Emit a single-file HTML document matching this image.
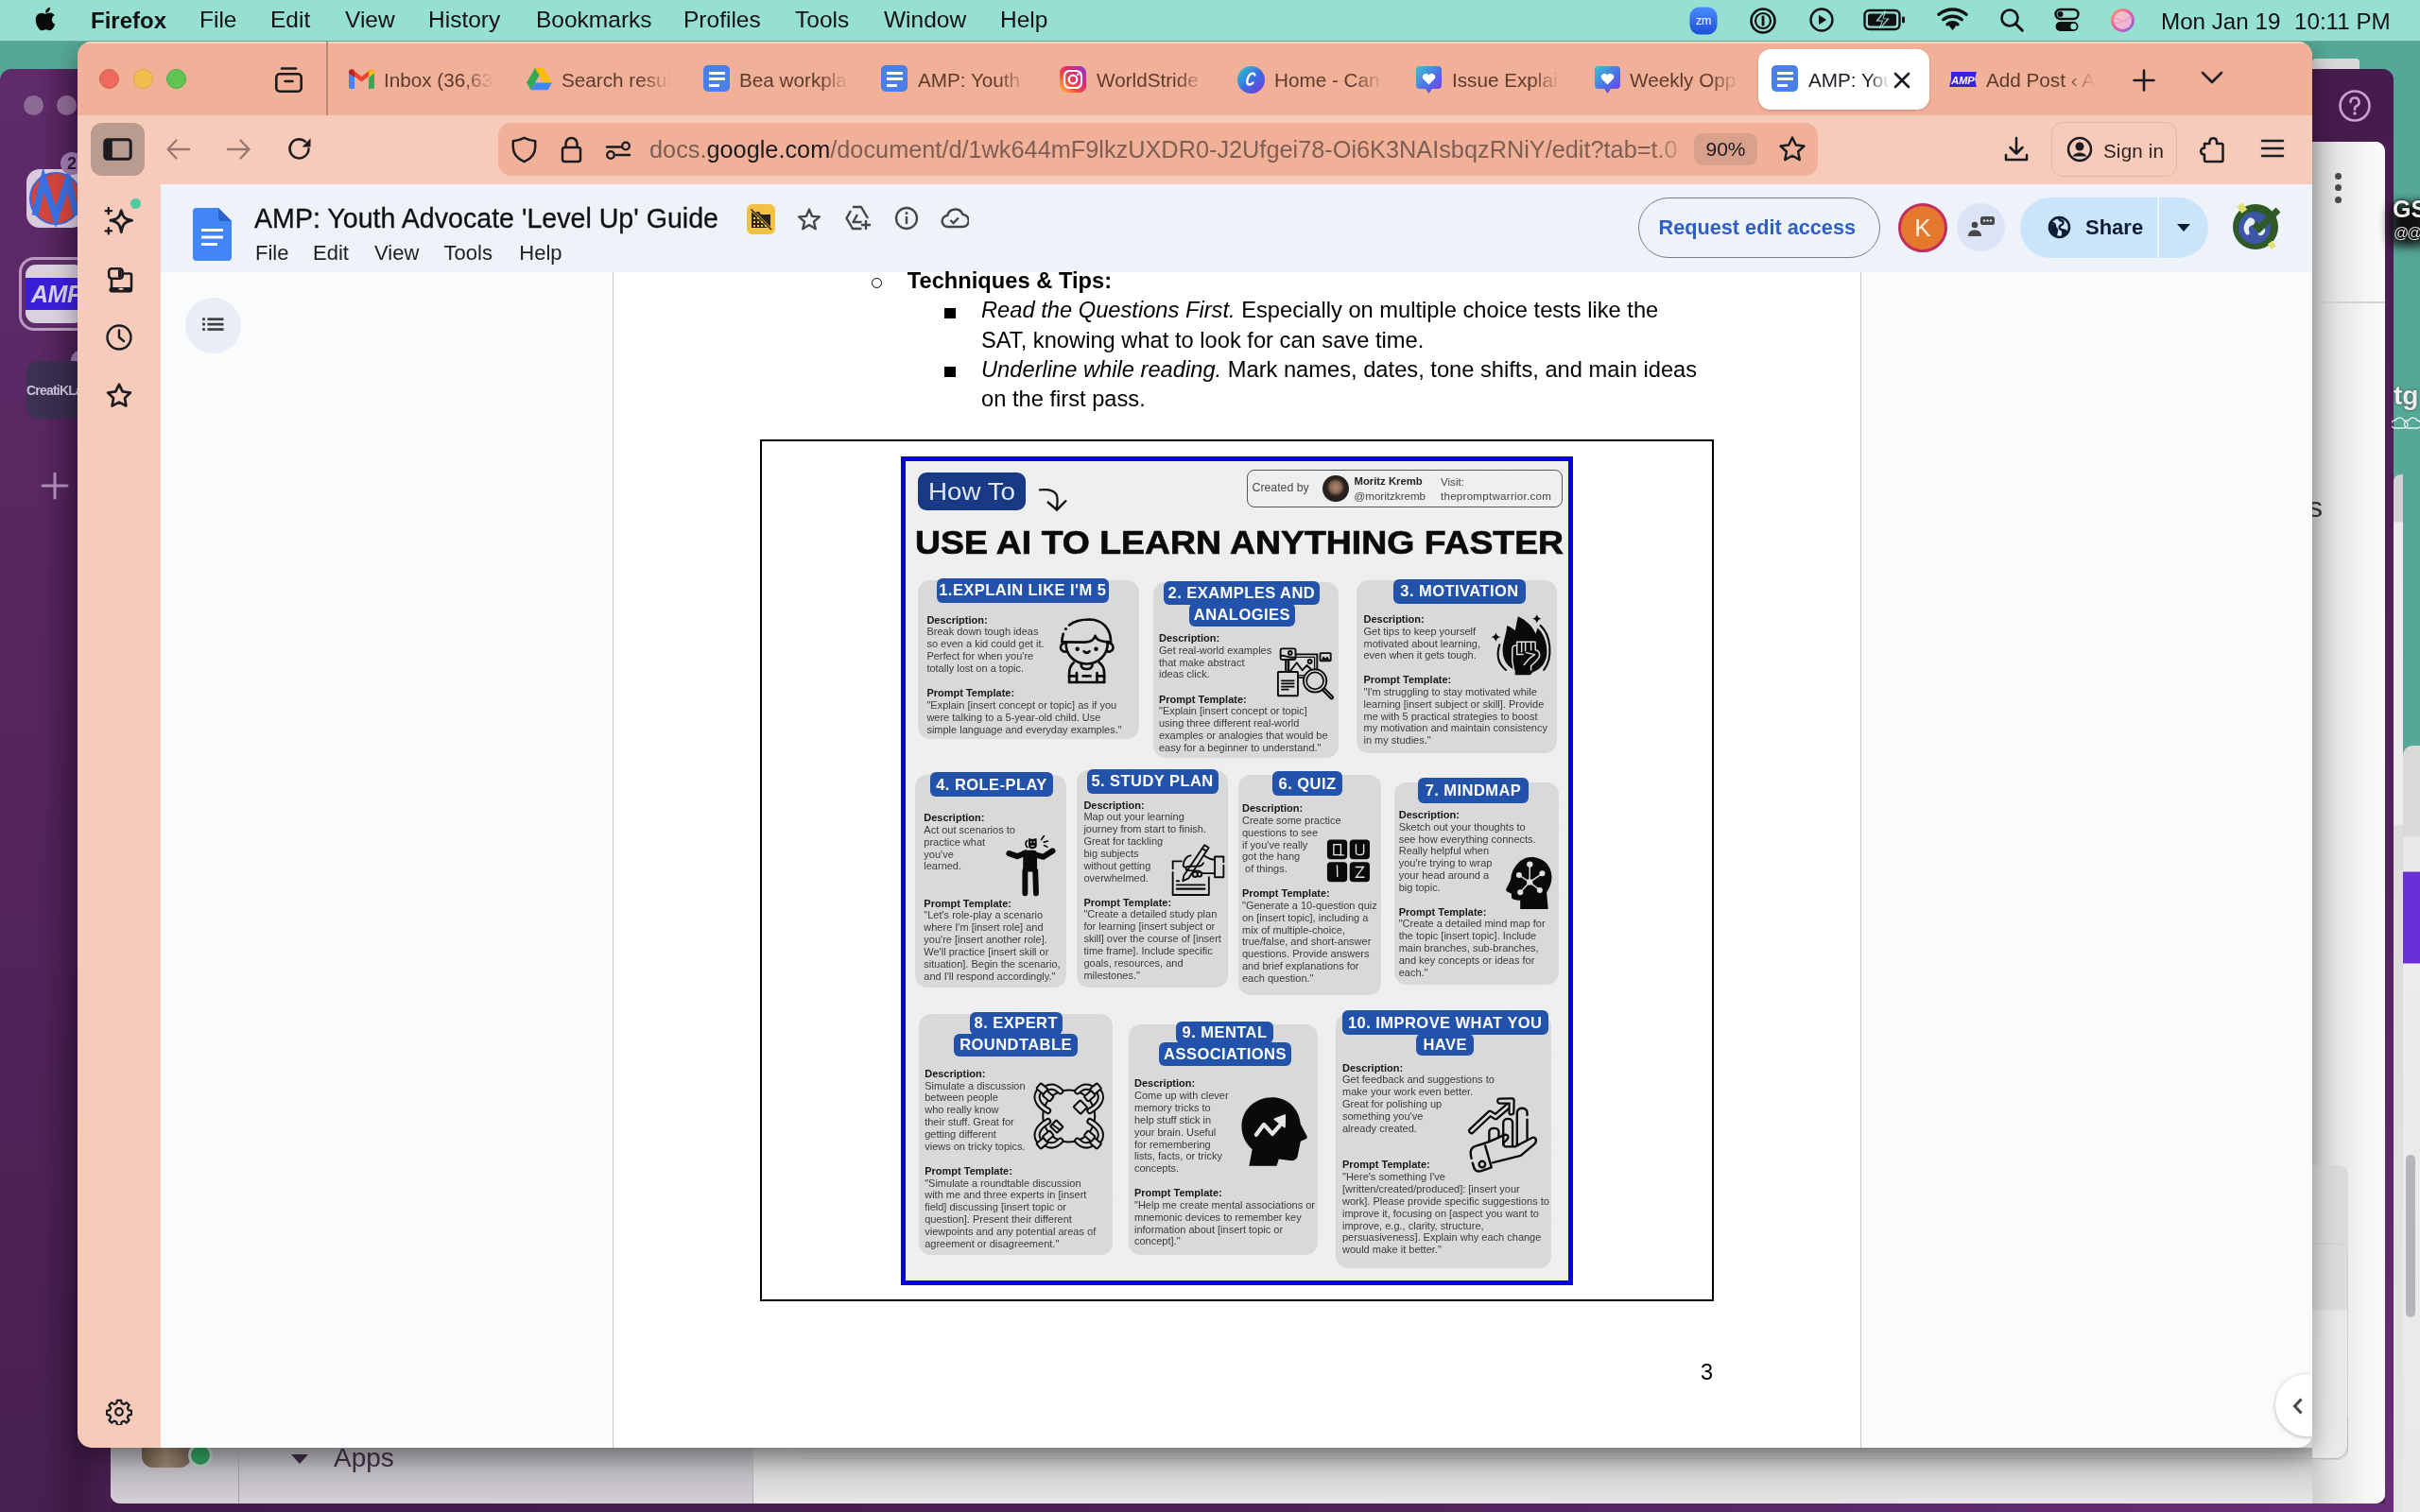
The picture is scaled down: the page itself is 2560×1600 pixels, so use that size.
<!DOCTYPE html>
<html><head><meta charset="utf-8">
<style>
*{box-sizing:border-box;margin:0;padding:0}
html,body{width:2560px;height:1600px;overflow:hidden}
body{position:relative;background:#56a896;font-family:"Liberation Sans",sans-serif;color:#000}
.a{position:absolute}
svg{display:block}
#menubar{left:0;top:0;width:2560px;height:43px;background:#96dfd3}
.mb{position:absolute;top:7.4px;font-size:24.5px;color:#111;white-space:nowrap}
#ff{left:82px;top:44px;width:2364px;height:1488px;border-radius:15px;overflow:hidden;background:#f6cbb9;box-shadow:0 8px 28px rgba(0,0,0,.38)}
#tabs{left:0;top:0;width:2364px;height:78px;background:#f1b198}
#nav{left:0;top:78px;width:2364px;height:73px;background:#f6cbb9}
#content{left:88px;top:151px;width:2276px;height:1337px;background:#f9fbfd;overflow:hidden}
#dochdr{left:0;top:0;width:2276px;height:93px;background:#eef2f9}
.tt{position:absolute;top:28.5px;font-size:20.7px;color:#5e3a2d;white-space:nowrap;width:118px;overflow:hidden;-webkit-mask-image:linear-gradient(90deg,#000 72%,transparent 98%)}
.dico{position:absolute;top:25px;width:28px;height:28px;border-radius:5px;background:#4a7fe8}
.dico i{position:absolute;left:5.5px;width:17px;height:3.3px;background:#fff}
.dico i:nth-child(1){top:6.5px}.dico i:nth-child(2){top:13px}.dico i:nth-child(3){top:19.5px;width:11px}
.dm{top:60.4px;font-size:22px;color:#1f1f1f;white-space:nowrap}
.doct{font-size:23.7px;white-space:nowrap;color:#000}
.bt{font-size:16.5px;font-weight:bold;color:#fff;text-align:center;white-space:nowrap;letter-spacing:.45px;line-height:19px}
.ct{font-size:11px;line-height:12.85px;margin-top:1.5px;color:#3a3a3a;white-space:nowrap}
.ct b{color:#161616}
</style></head><body>
<div id="root" style="position:absolute;left:0;top:0;width:2560px;height:1600px;overflow:hidden;will-change:transform"><!-- SLACK WINDOW (behind) -->

<div class="a" style="left:2446px;top:62px;width:50px;height:12px;background:#d8d8d8;border-radius:4px 4px 0 0"></div>
<div id="slack2" class="a" style="left:0;top:73px;width:2532px;height:1540px;border-radius:12px;background:linear-gradient(90deg,rgba(0,0,0,0) 0px,rgba(0,0,0,0) 40px,rgba(20,0,25,.25) 82px,rgba(0,0,0,0) 120px),linear-gradient(180deg,#5f2b69 0%,#54255d 50%,#47204f 100%)"></div>
<div class="a" style="left:2446px;top:73px;width:86px;height:90px;border-radius:0 12px 0 0;background:#471b4d"></div>
<!-- slack left sidebar icons -->
<div class="a" style="left:25px;top:101px;width:21px;height:21px;border-radius:50%;background:#8c6b94"></div>
<div class="a" style="left:60px;top:101px;width:21px;height:21px;border-radius:50%;background:#8c6b94"></div>
<div class="a" style="left:28px;top:179px;width:62px;height:62px;border-radius:14px;background:#d9cadd;overflow:hidden">
  <svg width="62" height="62" viewBox="0 0 62 62"><circle cx="31" cy="31" r="27" fill="#d2453c" stroke="#3a66d6" stroke-width="2"/><path d="M9 49L18 11l13 40 13-40 9 38" fill="none" stroke="#3a6fe0" stroke-width="7" stroke-linejoin="miter"/></svg>
</div>
<div class="a" style="left:64px;top:161px;width:24px;height:24px;border-radius:50%;background:#a07ab0;font-size:18px;line-height:24px;text-align:center;color:#2a1830;font-weight:bold">2</div>
<div class="a" style="left:20px;top:272px;width:76px;height:78px;border-radius:16px;border:3px solid #b99bc2;background:#5f2d69"></div>
<div class="a" style="left:27px;top:280px;width:62px;height:62px;border-radius:11px;background:#d9d0e0;overflow:hidden">
  <div class="a" style="left:0;top:14px;width:62px;height:34px;background:#3a1fd8"></div>
  <div class="a" style="left:6px;top:17px;font-size:25px;font-weight:bold;font-style:italic;color:#d8d0e8;letter-spacing:-.5px">AMP</div>
</div>
<div class="a" style="left:75px;top:370px;width:24px;height:24px;border-radius:50%;background:#9d7aa8"></div>
<div class="a" style="left:28px;top:382px;width:62px;height:61px;border-radius:12px;background:linear-gradient(90deg,#3b3352,#33294a)">
  <div class="a" style="left:0;top:23px;font-size:14px;font-weight:bold;color:#c9c2d8;letter-spacing:-.8px">CreatiKLa</div>
</div>
<svg class="a" style="left:43px;top:499px" width="30" height="30" viewBox="0 0 30 30"><path d="M15 2v26M2 15h26" stroke="#ad8cb7" stroke-width="3" stroke-linecap="round"/></svg>
<!-- slack main panel -->
<div id="slackpanel" class="a" style="left:117px;top:150px;width:2406px;height:1441px;border-radius:10px;background:linear-gradient(90deg,#f0f0f0,#fafafa)"></div>
<!-- right side of slack panel -->
<svg class="a" style="left:2473px;top:94px" width="36" height="36" viewBox="0 0 36 36"><circle cx="18" cy="18" r="15.5" fill="none" stroke="#c7a3cf" stroke-width="2.6"/><path d="M13.5 14a4.5 4.5 0 1 1 6.2 4.2c-1.2.5-1.7 1.3-1.7 2.5v1" fill="none" stroke="#c7a3cf" stroke-width="2.6" stroke-linecap="round"/><circle cx="18" cy="26" r="1.8" fill="#c7a3cf"/></svg>
<div class="a" style="left:2446px;top:150px;width:77px;height:1441px;background:linear-gradient(90deg,#cfcfcf 0%,#e6e6e6 35%,#f7f7f7 80%,#fbfbfb 100%);border-radius:0 10px 10px 0"></div>
<div class="a" style="left:2470px;top:183px;width:7px;height:7px;border-radius:50%;background:#4a4a4a"></div>
<div class="a" style="left:2470px;top:195px;width:7px;height:7px;border-radius:50%;background:#4a4a4a"></div>
<div class="a" style="left:2470px;top:208px;width:7px;height:7px;border-radius:50%;background:#4a4a4a"></div>
<div class="a" style="left:2446px;top:319px;width:77px;height:2px;background:#d3d3d3"></div>
<div class="a" style="left:2442px;top:520px;font-size:30px;color:#333">s</div>
<div class="a" style="left:2446px;top:1233px;width:38px;height:312px;border-radius:0 10px 10px 0;background:#dadada"></div>
<div class="a" style="left:2446px;top:1316px;width:38px;height:229px;border-radius:0 10px 10px 0;background:linear-gradient(180deg,#dcdcdc 0%,#dcdcdc 30%,#e8e8e8 31%,#eaeaea 100%);border:1px solid #cfcfcf;border-left:none"></div>
<!-- bottom strip of slack panel -->
<div class="a" style="left:117px;top:1532px;width:2329px;height:59px;border-radius:0 0 0 10px;background:linear-gradient(180deg,#a9a7ab 0%,#bebbc0 40%,#d3cfd5 100%)"></div>
<div class="a" style="left:797px;top:1532px;width:1649px;height:59px;background:linear-gradient(180deg,#b4b4b4 0%,#d2d2d2 40%,#e6e6e8 100%)"></div>
<div class="a" style="left:838px;top:1500px;width:1646px;height:44px;border-radius:0 0 14px 14px;border:1.5px solid #b9b9b9;border-top:none"></div>
<div class="a" style="left:252px;top:1532px;width:1px;height:59px;background:#a29ea6"></div>
<div class="a" style="left:796px;top:1532px;width:1px;height:59px;background:#b3b0b5"></div>
<div class="a" style="left:150px;top:1526px;width:52px;height:27px;border-radius:0 0 12px 12px;background:linear-gradient(90deg,#6b5a4a,#9a8670,#6e5f50)"></div>
<div class="a" style="left:199px;top:1527px;width:26px;height:26px;border-radius:50%;background:#2f9a5a;border:3px solid #b8c4bc"></div>
<svg class="a" style="left:307px;top:1538px" width="20" height="12" viewBox="0 0 20 12"><path d="M1 1h18L10 11z" fill="#3a2b44"/></svg>
<div class="a" style="left:353px;top:1527px;font-size:28px;color:#3b2f45">Apps</div>
<div class="a" style="left:2523px;top:150px;width:9px;height:1450px;background:linear-gradient(180deg,#4a1d51 0%,#52225c 50%,#692e79 100%)"></div>
<div class="a" style="left:117px;top:1591px;width:2415px;height:9px;background:linear-gradient(90deg,#3f1a48 0%,#4d2157 50%,#692e79 100%);border-radius:0 0 12px 0"></div>
<!-- desktop far right -->
<div class="a" style="left:2532px;top:502px;width:10px;height:1110px;border-radius:8px 0 0 0;background:linear-gradient(180deg,#d2d2d2 0px,#d2d2d2 50px,#ebebeb 51px,#ececec 370px,#dcdcdc 372px,#e4e4e4 100%)"></div>
<div class="a" style="left:2541.5px;top:789px;width:30px;height:820px;border-radius:10px 0 0 0;background:linear-gradient(180deg,#d9d9d9 0px,#d9d9d9 96px,#e8e8e8 97px,#e8e8e8 133px,#6a2fd6 134px,#6a2fd6 230px,#ececec 231px,#e9e9eb 100%)"></div>
<div class="a" style="left:2545px;top:1222px;width:10px;height:172px;border-radius:5px;background:#b3b5ba"></div>
<div class="a" style="left:2528px;top:215px;width:40px;height:45px;background:#111;filter:blur(6px);border-radius:8px"></div><div class="a" style="left:2531px;top:207px;font-size:25px;font-weight:bold;color:#eee;text-shadow:0 0 3px #000">GS</div><div class="a" style="left:2532px;top:238px;font-size:16px;color:#ddd;letter-spacing:-2px">@@@@</div>
<div class="a" style="left:2532px;top:403px;font-size:28px;font-weight:bold;color:#eee;text-shadow:0 0 3px #333">tg</div><svg class="a" style="left:2530px;top:440px" width="30" height="16" viewBox="0 0 30 16"><path d="M3 13a4 4 0 0 1 1-8 5 5 0 0 1 9 0 4 4 0 0 1 0 8zM17 13a4 4 0 0 1 1-8 5 5 0 0 1 9 0 4 4 0 0 1 0 8z" fill="none" stroke="#e8f4f0" stroke-width="1.3"/></svg>
<div id="ff" class="a">
  <div id="tabs" class="a"><div class="a" style="left:0;top:0;width:2364px;height:1.5px;background:rgba(255,245,225,.55)"></div>
    <div class="a" style="left:23px;top:29px;width:21px;height:21px;border-radius:50%;background:#ee6a5f;border:1px solid #d9574c"></div>
    <div class="a" style="left:58.5px;top:29px;width:21px;height:21px;border-radius:50%;background:#f4be4f;border:1px solid #dfa63c"></div>
    <div class="a" style="left:93.5px;top:29px;width:21px;height:21px;border-radius:50%;background:#5fc454;border:1px solid #4aa83f"></div>
    <svg class="a" style="left:208px;top:26px" width="31" height="29" viewBox="0 0 31 29"><path d="M8 2.5h15" stroke="#1c1b22" stroke-width="2.6" stroke-linecap="round"/><rect x="2.3" y="8.3" width="26.4" height="18.4" rx="3.5" fill="none" stroke="#1c1b22" stroke-width="2.6"/><path d="M11.5 16h8" stroke="#1c1b22" stroke-width="2.6" stroke-linecap="round"/></svg>
    <div class="a" style="left:263px;top:0;width:1.5px;height:78px;background:#b88a78"></div>
    <!-- tabs -->
    <svg class="a" style="left:287px;top:29px" width="27" height="21" viewBox="0 0 27 21"><path d="M0 3.5v15.5a2 2 0 0 0 2 2h4V9z" fill="#4285f4"/><path d="M21 9v12h4a2 2 0 0 0 2-2V3.5z" fill="#34a853"/><path d="M0 3.5L13.5 13.5 27 3.5A3 3 0 0 0 22.5 1L13.5 8 4.5 1A3 3 0 0 0 0 3.5z" fill="#ea4335"/><path d="M21 3v6l6-4.5V3.5A3 3 0 0 0 22.5 1z" fill="#fbbc04"/><path d="M0 3.5v1L6 9V3A3 3 0 0 0 0 3.5z" fill="#c5221f"/></svg>
    <div class="tt" style="left:324px">Inbox (36,63</div>
    <svg class="a" style="left:475px;top:27px" width="27" height="25" viewBox="0 0 27 25"><path d="M9 1h9l9 15.5h-9z" fill="#fbbc04"/><path d="M9 1L0 16.5l4.5 7.8L13.5 8.8z" fill="#34a853"/><path d="M4.5 24.3h18l4.5-7.8H9z" fill="#4285f4"/></svg>
    <div class="tt" style="left:512px">Search resul</div>
    <div class="dico" style="left:662px"><i></i><i></i><i class="s"></i></div>
    <div class="tt" style="left:700px">Bea workpla</div>
    <div class="dico" style="left:850px"><i></i><i></i><i class="s"></i></div>
    <div class="tt" style="left:889px">AMP: Youth</div>
    <svg class="a" style="left:1039px;top:26px" width="28" height="28" viewBox="0 0 28 28"><defs><linearGradient id="igg" x1="0" y1="1" x2="1" y2="0"><stop offset="0" stop-color="#fdc846"/><stop offset=".35" stop-color="#f5503b"/><stop offset=".65" stop-color="#d9297e"/><stop offset="1" stop-color="#7a3ad8"/></linearGradient></defs><rect x="0" y="0" width="28" height="28" rx="7" fill="url(#igg)"/><rect x="5" y="5" width="18" height="18" rx="5.5" fill="none" stroke="#fff" stroke-width="2.2"/><circle cx="14" cy="14" r="4.3" fill="none" stroke="#fff" stroke-width="2.2"/><circle cx="19.3" cy="8.7" r="1.3" fill="#fff"/></svg>
    <div class="tt" style="left:1078px">WorldStride</div>
    <svg class="a" style="left:1227px;top:26px" width="29" height="29" viewBox="0 0 29 29"><defs><linearGradient id="cvg" x1="0" y1="0" x2="1" y2="1"><stop offset="0" stop-color="#2ad0d0"/><stop offset=".5" stop-color="#3b6fe0"/><stop offset="1" stop-color="#7b2fe0"/></linearGradient></defs><circle cx="14.5" cy="14.5" r="14.5" fill="url(#cvg)"/><path d="M18.5 9.5c-.5-2-2.5-2.3-4-1.5-3 1.6-5 7-4 10 .8 2.3 3.8 2 6-.5" fill="none" stroke="#fff" stroke-width="2.4" stroke-linecap="round"/></svg>
    <div class="tt" style="left:1266px">Home - Can</div>
    <svg class="a" style="left:1415px;top:25px" width="29" height="31" viewBox="0 0 29 31"><defs><linearGradient id="htg" x1="0" y1="0" x2="1" y2="1"><stop offset="0" stop-color="#35c6d6"/><stop offset=".55" stop-color="#4f6fe6"/><stop offset="1" stop-color="#7a3ae0"/></linearGradient></defs><path d="M5 1h19a4 4 0 0 1 4 4v16a4 4 0 0 1-4 4h-6l-3.5 5-3.5-5H5a4 4 0 0 1-4-4V5a4 4 0 0 1 4-4z" fill="url(#htg)"/><path d="M14.5 20.5l-6-6a3.6 3.6 0 0 1 6-4 3.6 3.6 0 0 1 6 4z" fill="#fff"/></svg>
    <div class="tt" style="left:1454px">Issue Explai</div>
    <svg class="a" style="left:1604px;top:25px" width="29" height="31" viewBox="0 0 29 31"><path d="M5 1h19a4 4 0 0 1 4 4v16a4 4 0 0 1-4 4h-6l-3.5 5-3.5-5H5a4 4 0 0 1-4-4V5a4 4 0 0 1 4-4z" fill="url(#htg)"/><path d="M14.5 20.5l-6-6a3.6 3.6 0 0 1 6-4 3.6 3.6 0 0 1 6 4z" fill="#fff"/></svg>
    <div class="tt" style="left:1642px">Weekly Opp</div>
    <!-- active tab -->
    <div class="a" style="left:1778px;top:8px;width:181px;height:64px;border-radius:13px;background:#fff;box-shadow:0 1px 3px rgba(0,0,0,.18)"></div>
    <div class="dico" style="left:1792px"><i></i><i></i><i class="s"></i></div>
    <div class="tt" style="left:1831px;color:#1c1b22;width:88px">AMP: You</div>
    <svg class="a" style="left:1920px;top:31px" width="20" height="20" viewBox="0 0 20 20"><path d="M3 3l14 14M17 3L3 17" stroke="#1c1b22" stroke-width="2.6" stroke-linecap="round"/></svg>
    <svg class="a" style="left:1980px;top:32px" width="29" height="16" viewBox="0 0 29 16"><path d="M2 0h27l-2 8 2 8H0l2-8z" fill="#3b20d9"/><text x="14.5" y="12.5" font-family="Liberation Sans" font-size="11" font-weight="bold" font-style="italic" fill="#fff" text-anchor="middle">AMP</text></svg>
    <div class="tt" style="left:2019px">Add Post ‹ A</div>
    <svg class="a" style="left:2174px;top:29px" width="24" height="24" viewBox="0 0 24 24"><path d="M12 1.5v21M1.5 12h21" stroke="#1c1b22" stroke-width="2.6" stroke-linecap="round"/></svg>
    <svg class="a" style="left:2246px;top:30px" width="24" height="16" viewBox="0 0 24 16"><path d="M2 3l10 10L22 3" fill="none" stroke="#1c1b22" stroke-width="2.6" stroke-linecap="round" stroke-linejoin="round"/></svg>
  </div>
  <div id="nav" class="a">
    <div class="a" style="left:14px;top:8px;width:57px;height:56px;border-radius:12px;background:#b99b90"></div>
    <svg class="a" style="left:27px;top:24px" width="31" height="24" viewBox="0 0 31 24"><rect x="1.8" y="1.8" width="27.4" height="20.4" rx="3" fill="none" stroke="#1c1b22" stroke-width="3"/><rect x="1.8" y="1.8" width="8" height="20.4" rx="1.5" fill="#1c1b22"/></svg>
    <svg class="a" style="left:93px;top:24px" width="27" height="24" viewBox="0 0 27 24"><path d="M25 12H3M11.5 2.5L2.5 12l9 9.5" fill="none" stroke="#9a7a70" stroke-width="2.4" stroke-linecap="round" stroke-linejoin="round"/></svg>
    <svg class="a" style="left:157px;top:24px" width="27" height="24" viewBox="0 0 27 24"><path d="M2 12h22M15.5 2.5l9 9.5-9 9.5" fill="none" stroke="#9a7a70" stroke-width="2.4" stroke-linecap="round" stroke-linejoin="round"/></svg>
    <svg class="a" style="left:221px;top:22px" width="28" height="28" viewBox="0 0 28 28"><path d="M23.5 13.5A10 10 0 1 1 20 5.8" fill="none" stroke="#1c1b22" stroke-width="2.5" stroke-linecap="round"/><path d="M25.5 2.5v9h-9z" fill="#1c1b22"/></svg>
    <!-- url bar -->
    <div class="a" style="left:444.5px;top:8px;width:1396px;height:56px;border-radius:14px;background:#f1b198"></div>
    <svg class="a" style="left:459px;top:22px" width="27" height="29" viewBox="0 0 27 29"><path d="M13.5 1.8C9 4 5.5 5 1.8 5.2v6.3c0 7 4.5 12.5 11.7 15.7 7.2-3.2 11.7-8.7 11.7-15.7V5.2C21.5 5 18 4 13.5 1.8z" fill="none" stroke="#1c1b22" stroke-width="2.5" stroke-linejoin="round"/></svg>
    <svg class="a" style="left:511px;top:22px" width="23" height="29" viewBox="0 0 23 29"><rect x="2" y="12" width="19" height="15" rx="2.5" fill="none" stroke="#1c1b22" stroke-width="2.5"/><path d="M5.5 12V8a6 6 0 0 1 12 0v4" fill="none" stroke="#1c1b22" stroke-width="2.5"/></svg>
    <svg class="a" style="left:558px;top:26px" width="28" height="22" viewBox="0 0 28 22"><path d="M2 7.5h15M12 16h14" stroke="#1c1b22" stroke-width="2.4" stroke-linecap="round"/><circle cx="22" cy="6.5" r="3.8" fill="none" stroke="#1c1b22" stroke-width="2.3"/><circle cx="6" cy="16" r="3.8" fill="none" stroke="#1c1b22" stroke-width="2.3"/></svg>
    <div class="a" style="left:605px;top:22px;font-size:25.3px;color:#7d5e55;white-space:nowrap;width:1100px;overflow:hidden;-webkit-mask-image:linear-gradient(90deg,#000 1060px,transparent 1100px)">docs.<span style="color:#1c1b22">google.com</span>/document/d/1wk644mF9lkzUXDR0-J2Ufgei78-Oi6K3NAIsbqzRNiY/edit?tab=t.0</div>
    <div class="a" style="left:1710px;top:19px;width:67px;height:34px;border-radius:9px;background:#d9a08b;font-size:21px;line-height:34px;text-align:center;color:#1c1b22">90%</div>
    <svg class="a" style="left:1799px;top:21px" width="30" height="30" viewBox="0 0 30 30"><path d="M15 2.5l3.8 8 8.7 1-6.4 6 1.7 8.6L15 21.8l-7.8 4.3 1.7-8.6-6.4-6 8.7-1z" fill="none" stroke="#1c1b22" stroke-width="2.4" stroke-linejoin="round"/></svg>
    <svg class="a" style="left:2037px;top:22px" width="28" height="28" viewBox="0 0 28 28"><path d="M14 2v16M7.5 12l6.5 6.5 6.5-6.5M3 20v5h22v-5" fill="none" stroke="#1c1b22" stroke-width="2.5" stroke-linecap="round" stroke-linejoin="round"/></svg>
    <div class="a" style="left:2088px;top:7px;width:133px;height:58px;border-radius:12px;border:1.5px solid #e7b6a4"></div>
    <svg class="a" style="left:2104px;top:22px" width="28" height="28" viewBox="0 0 28 28"><circle cx="14" cy="14" r="12" fill="none" stroke="#1c1b22" stroke-width="2.5"/><circle cx="14" cy="11" r="4.5" fill="#1c1b22"/><path d="M6.5 21.5c2-3 4.5-4 7.5-4s5.5 1 7.5 4" fill="#1c1b22"/></svg>
    <div class="a" style="left:2143px;top:25.5px;font-size:20.5px;color:#2a1d1a;letter-spacing:.2px">Sign in</div>
    <svg class="a" style="left:2245px;top:20px" width="28" height="32" viewBox="0 0 28 32"><path d="M5 10H10.5V7.5A3.8,3.8 0 0 1 18,7.5V10H23A1.5,1.5 0 0 1 24.5,11.5V27.5A1.5,1.5 0 0 1 23,29H6.5A1.5,1.5 0 0 1 5,27.5V21.5H4.5A3.4,3.4 0 0 1 4.5,14.7H5Z" fill="none" stroke="#1c1b22" stroke-width="2.5" stroke-linejoin="round"/></svg>
    <svg class="a" style="left:2309px;top:24px" width="26" height="22" viewBox="0 0 26 22"><path d="M2 3h22M2 11h22M2 19h22" stroke="#1c1b22" stroke-width="2.5" stroke-linecap="round"/></svg>
  </div>
  <!-- firefox sidebar -->
  <div class="a" style="left:56px;top:166px;width:11px;height:11px;border-radius:50%;background:#4fc9a0"></div>
  <svg class="a" style="left:26px;top:174px" width="34" height="34" viewBox="0 0 34 34"><path d="M20.3,4.8 C21.8,11.5 23.5,14 31.5,15.3 C23.5,16.8 21.8,19.3 20.3,27.5 C18.8,19.3 17,16.8 9,15.3 C17,14 18.8,11.5 20.3,4.8 Z" fill="none" stroke="#1c1b22" stroke-width="2.9" stroke-linejoin="round"/><path d="M6.8 2v6.4M3.6 5.2h6.4M6.8 23.2v6.4M3.6 26.4h6.4" stroke="#1c1b22" stroke-width="2.3" stroke-linecap="round"/></svg>
  <svg class="a" style="left:30px;top:236px" width="32" height="32" viewBox="0 0 32 32"><rect x="3.2" y="4.2" width="14.5" height="10.5" rx="3" fill="none" stroke="#1c1b22" stroke-width="2.6"/><rect x="13" y="5.5" width="3.5" height="8" fill="#1c1b22"/><path d="M18 9.5h7.5a1.5 1.5 0 0 1 1.5 1.5v14M6 15v10" fill="none" stroke="#1c1b22" stroke-width="2.6"/><rect x="3.5" y="24" width="24.7" height="5.5" rx="2.7" fill="#1c1b22"/><rect x="13.5" y="24.8" width="5" height="2" rx="1" fill="#f6cbb9"/></svg>
  <svg class="a" style="left:28px;top:297px" width="32" height="32" viewBox="0 0 32 32"><circle cx="16" cy="16" r="12.5" fill="none" stroke="#1c1b22" stroke-width="2.4"/><path d="M16 8.5V16l5 4" fill="none" stroke="#1c1b22" stroke-width="2.4" stroke-linecap="round"/></svg>
  <svg class="a" style="left:28px;top:359px" width="32" height="32" viewBox="0 0 32 32"><path d="M16 3.8l3.7 7.5 8.2 1.2-5.9 5.8 1.4 8.2L16 22.6l-7.4 3.9 1.4-8.2-5.9-5.8 8.2-1.2z" fill="none" stroke="#1c1b22" stroke-width="2.7" stroke-linejoin="round"/></svg>
  <svg class="a" style="left:30px;top:1436px" width="28" height="28" viewBox="0 0 28 28"><path d="M12 1.8h4l.7 3.3 2.4 1 2.8-1.9 2.8 2.8-1.9 2.8 1 2.4 3.3.7v4l-3.3.7-1 2.4 1.9 2.8-2.8 2.8-2.8-1.9-2.4 1-.7 3.3h-4l-.7-3.3-2.4-1-2.8 1.9-2.8-2.8 1.9-2.8-1-2.4-3.3-.7v-4l3.3-.7 1-2.4-1.9-2.8 2.8-2.8 2.8 1.9 2.4-1z" fill="none" stroke="#1c1b22" stroke-width="2.2" stroke-linejoin="round"/><circle cx="14" cy="14" r="3.8" fill="none" stroke="#1c1b22" stroke-width="2.2"/></svg>
  <div id="content" class="a">
        <div id="dochdr" class="a">
      <svg class="a" style="left:34px;top:25px" width="41" height="56" viewBox="0 0 41 56"><path d="M4 0h23l14 14v38a4 4 0 0 1-4 4H4a4 4 0 0 1-4-4V4a4 4 0 0 1 4-4z" fill="#4285f4"/><path d="M27 0l14 14H31a4 4 0 0 1-4-4z" fill="#2a62c9"/><path d="M9 23.5h23M9 31h23M9 38.5h17" stroke="#fff" stroke-width="3.2"/></svg>
      <div class="a" style="left:99px;top:20.4px;font-size:28.6px;color:#111;-webkit-text-stroke:.3px #111;white-space:nowrap">AMP: Youth Advocate 'Level Up' Guide</div>
      <div class="a dm" style="left:100px">File</div>
      <div class="a dm" style="left:161px">Edit</div>
      <div class="a dm" style="left:226px">View</div>
      <div class="a dm" style="left:299.6px">Tools</div>
      <div class="a dm" style="left:379.3px">Help</div>
      <div class="a" style="left:620px;top:21px;width:30px;height:32px;border-radius:6px;background:#f2c043"></div>
      <svg class="a" style="left:623px;top:25px" width="24" height="24" viewBox="0 0 24 24"><path d="M2 4l4 2V4h4l2 3h10v14H2z" fill="#2a2418"/><path d="M1.5 1.5L23 23" stroke="#f2c043" stroke-width="3"/><path d="M1.5 1.5L23 23" stroke="#2a2418" stroke-width="1.5"/><g fill="#f2c043"><rect x="4" y="10" width="2" height="2"/><rect x="8" y="10" width="2" height="2"/><rect x="4" y="14" width="2" height="2"/><rect x="8" y="14" width="2" height="2"/><rect x="12" y="14" width="2" height="2"/><rect x="4" y="18" width="2" height="2"/><rect x="8" y="18" width="2" height="2"/><rect x="12" y="18" width="2" height="2"/><rect x="16" y="18" width="2" height="2"/></g></svg>
      <svg class="a" style="left:673px;top:24px" width="26" height="25" viewBox="0 0 26 25"><path d="M13 2.5l3 7.3 7.9.6-6 5.2 1.9 7.7L13 19.1l-6.8 4.2 1.9-7.7-6-5.2 7.9-.6z" fill="none" stroke="#444746" stroke-width="2.3" stroke-linejoin="round"/></svg>
      <svg class="a" style="left:723px;top:22px" width="29" height="28" viewBox="0 0 29 28"><path d="M9 2h9l7 12M18.5 25H9l-6.5-11L7 6" fill="none" stroke="#444746" stroke-width="2.4" stroke-linejoin="round"/><path d="M14 10l-4.5 8h9" fill="none" stroke="#444746" stroke-width="2.4" stroke-linejoin="round"/><path d="M23 16v10M18 21h10" stroke="#444746" stroke-width="2.4"/></svg>
      <svg class="a" style="left:776px;top:23px" width="26" height="26" viewBox="0 0 26 26"><circle cx="13" cy="13" r="11" fill="none" stroke="#444746" stroke-width="2.3"/><path d="M13 11v8" stroke="#444746" stroke-width="2.4"/><circle cx="13" cy="7.5" r="1.5" fill="#444746"/></svg>
      <svg class="a" style="left:825px;top:25px" width="30" height="22" viewBox="0 0 30 22"><path d="M8 20a6 6 0 0 1-.7-12A8.5 8.5 0 0 1 23.5 7a6.5 6.5 0 0 1-.5 13z" fill="none" stroke="#444746" stroke-width="2.4" stroke-linejoin="round"/><path d="M10.5 13l3 3 5.5-5.5" fill="none" stroke="#444746" stroke-width="2.4"/></svg>
      <div class="a" style="left:1563px;top:14px;width:256px;height:64px;border-radius:32px;border:1.3px solid #7c7f84"></div>
      <div class="a" style="left:1584.5px;top:32.8px;font-size:21.7px;font-weight:bold;color:#2f5fc4;white-space:nowrap">Request edit access</div>
      <div class="a" style="left:1838px;top:20px;width:52px;height:52px;border-radius:50%;background:#e5782c;border:3px solid #c42e5e"></div>
      <div class="a" style="left:1838px;top:31px;width:52px;text-align:center;font-size:26px;color:#fdf1e0">K</div>
      <div class="a" style="left:1900px;top:20px;width:51px;height:51px;border-radius:50%;background:#dbe3f7"></div>
      <svg class="a" style="left:1911px;top:33px" width="30" height="24" viewBox="0 0 30 24"><circle cx="8" cy="10" r="3.3" fill="#474747"/><path d="M1 22c0-4.5 3-6.5 7-6.5s7 2 7 6.5z" fill="#474747"/><rect x="14" y="1" width="15" height="9" rx="2.5" fill="#474747"/><circle cx="18" cy="5.5" r="1.2" fill="#dbe3f7"/><circle cx="21.5" cy="5.5" r="1.2" fill="#dbe3f7"/><circle cx="25" cy="5.5" r="1.2" fill="#dbe3f7"/></svg>
      <div class="a" style="left:1966.5px;top:14px;width:199px;height:64px;border-radius:32px;background:#c9e4fb"></div>
      <div class="a" style="left:2112px;top:14px;width:1.5px;height:64px;background:#eaf4fd"></div>
      <svg class="a" style="left:1996px;top:33px" width="25" height="25" viewBox="0 0 25 25"><circle cx="12.5" cy="12.5" r="10.5" fill="none" stroke="#0b1d33" stroke-width="2.6"/><path d="M4 8c3 0 4 1.5 4 3.5s2 2 2 4-1 3-1 6M12 2.5c0 2 1.5 3 3 3s2 2 1 3.5-3 1-3.5 3 2 3.5 4.5 3.5 3.5 2 3.5 3.5" fill="none" stroke="#0b1d33" stroke-width="2.3"/><path d="M3 9l5 1 2 5-1 7C5 20 2.5 16 3 9zM15 15l5 .5-1 4.5-4 2z" fill="#0b1d33"/></svg>
      <div class="a" style="left:2036px;top:33.4px;font-size:22px;font-weight:bold;color:#0b1d33">Share</div>
      <svg class="a" style="left:2133px;top:42px" width="14" height="8" viewBox="0 0 14 8"><path d="M0 0h14L7 8z" fill="#0b1d33"/></svg>
      <svg class="a" style="left:2190px;top:19px" width="52" height="52" viewBox="0 0 52 52"><circle cx="26" cy="26" r="24" fill="#2f5a27"/><circle cx="25" cy="27" r="17" fill="#3c56a5"/><path d="M20 16c4 1 6 3 5 6s-5 2-6 5 2 5 0 7-4-1-5-4 0-10 6-14zM32 26c3 0 5 2 4 5s-4 5-6 4-1-4 0-6 0-3 2-3z" fill="#e8eef5"/><path d="M50 8L30 28l-5-5" fill="none" stroke="#2f5a27" stroke-width="7"/><rect x="8" y="2" width="7" height="9" fill="#e0e070" transform="rotate(-35 11 6)"/><rect x="40" y="42" width="6" height="7" fill="#e0e070" transform="rotate(-35 43 45)"/></svg>
    </div>
    <!-- outline button -->
    <div class="a" style="left:26px;top:120px;width:59px;height:59px;border-radius:50%;background:#e9edf5"></div>
    <svg class="a" style="left:43px;top:139px" width="24" height="18" viewBox="0 0 24 18"><g fill="#3c4043"><rect x="1" y="2.2" width="3" height="3" rx="1.2"/><rect x="1" y="7.6" width="3" height="3" rx="1.2"/><rect x="1" y="13" width="3" height="3" rx="1.2"/><rect x="6.5" y="2.4" width="17" height="2.7"/><rect x="6.5" y="7.8" width="17" height="2.7"/><rect x="6.5" y="13.2" width="17" height="2.7"/></g></svg>
    <!-- page -->
    <div class="a" style="left:478px;top:93px;width:1321px;height:1260px;background:#fff;border-left:1px solid #c6c8cc;border-right:1px solid #c6c8cc"></div>
    <div class="a" style="left:752px;top:99px;width:11px;height:11px;border-radius:50%;border:1.5px solid #000"></div>
    <div class="a doct" style="left:789.8px;top:89px;font-weight:bold">Techniques &amp; Tips:</div>
    <div class="a" style="left:829px;top:130.5px;width:11.5px;height:11px;background:#000"></div>
    <div class="a doct" style="left:868px;top:120px"><i>Read the Questions First.</i> Especially on multiple choice tests like the</div>
    <div class="a doct" style="left:868px;top:151.5px">SAT, knowing what to look for can save time.</div>
    <div class="a" style="left:829px;top:193px;width:11.5px;height:11px;background:#000"></div>
    <div class="a doct" style="left:868px;top:182.5px"><i>Underline while reading.</i> Mark names, dates, tone shifts, and main ideas</div>
    <div class="a doct" style="left:868px;top:213.5px">on the first pass.</div>
    <div class="a" style="left:634px;top:270px;width:1009px;height:912px;border:2px solid #000"></div>
    <div class="a doct" style="left:1629px;top:1244px;font-size:23.5px">3</div>
    <!-- side panel toggle -->
    <div class="a" style="left:2237px;top:1259px;width:66px;height:66px;border-radius:50%;background:#fff;box-shadow:0 1px 4px rgba(0,0,0,.3)"></div>
    <svg class="a" style="left:2254px;top:1283px" width="14" height="20" viewBox="0 0 14 20"><path d="M10.5 2.5L3.5 10l7 7.5" fill="none" stroke="#444746" stroke-width="3"/></svg>

  </div>
</div>
<div class="a" style="left:953px;top:483px;width:711px;height:877px;border:5px solid #0a00e6;background:#f1f1f1"></div>
<svg class="a" style="left:958px;top:488px" width="701" height="867"><filter id="nz"><feTurbulence type="fractalNoise" baseFrequency="0.9" numOctaves="1" seed="3"/><feColorMatrix values="0 0 0 0 0.5  0 0 0 0 0.5  0 0 0 0 0.5  0 0 0 .09 0"/></filter><rect width="701" height="867" filter="url(#nz)"/></svg>
<div class="a" style="left:971px;top:500px;width:114px;height:40px;border-radius:9px;background:#183a85"></div>
<div class="a" style="left:982px;top:505.5px;font-size:25px;color:#dfe5f2;white-space:nowrap;transform-origin:0 0;transform:scaleX(1.11)">How To</div>
<svg class="a" style="left:1098px;top:516px" width="38" height="26" viewBox="0 0 38 26"><path d="M1 2.5c8-1 15 0 18 4s1 11 1 16" fill="none" stroke="#111" stroke-width="2.2"/><path d="M10 15l10 8.5 10-10" fill="none" stroke="#111" stroke-width="2.4"/></svg>
<div class="a" style="left:1318.5px;top:497px;width:334px;height:40px;border-radius:8px;border:1.5px solid #555"></div>
<div class="a" style="left:1324.5px;top:509px;font-size:12.3px;color:#4a4a4a;white-space:nowrap">Created by</div>
<div class="a" style="left:1398.5px;top:502.5px;width:28px;height:28px;border-radius:50%;background:radial-gradient(circle at 50% 45%,#b08a72 0,#8a6650 28%,#2a2220 45%,#1a1a1a 100%)"></div>
<div class="a" style="left:1432.5px;top:502.5px;font-size:11.3px;font-weight:bold;color:#222;white-space:nowrap">Moritz Kremb</div>
<div class="a" style="left:1432.5px;top:517.5px;font-size:11.6px;color:#444;white-space:nowrap">@moritzkremb</div>
<div class="a" style="left:1524px;top:502.5px;font-size:11.6px;color:#444;white-space:nowrap">Visit:</div>
<div class="a" style="left:1524px;top:517.5px;font-size:11.6px;color:#444;white-space:nowrap;letter-spacing:.25px">thepromptwarrior.com</div>
<div class="a" style="left:968px;top:555px;font-size:34.3px;font-weight:bold;color:#0a0a0a;white-space:nowrap;transform-origin:0 0;transform:scaleX(1.09);-webkit-text-stroke:.7px #0a0a0a">USE AI TO LEARN ANYTHING FASTER</div>
<div class="a" style="left:970.6px;top:613.7px;width:234.8px;height:168.3px;border-radius:13px;background:#d9d9d9"></div>
<div class="a" style="left:1219.8px;top:616px;width:196.7px;height:185.8px;border-radius:13px;background:#d9d9d9"></div>
<div class="a" style="left:1435.4px;top:613.7px;width:211.6px;height:182.9px;border-radius:13px;background:#d9d9d9"></div>
<div class="a" style="left:967.5px;top:820px;width:160.5px;height:224.6px;border-radius:13px;background:#d9d9d9"></div>
<div class="a" style="left:1139.4px;top:815.3px;width:159.9px;height:229.3px;border-radius:13px;background:#d9d9d9"></div>
<div class="a" style="left:1310px;top:820px;width:151.4px;height:233.2px;border-radius:13px;background:#d9d9d9"></div>
<div class="a" style="left:1474.6px;top:827.5px;width:174.9px;height:214.1px;border-radius:13px;background:#d9d9d9"></div>
<div class="a" style="left:972px;top:1073px;width:205.0px;height:255.3px;border-radius:13px;background:#d9d9d9"></div>
<div class="a" style="left:1194.4px;top:1083.6px;width:199.6px;height:244.7px;border-radius:13px;background:#d9d9d9"></div>
<div class="a" style="left:1413.4px;top:1073px;width:227.6px;height:269.0px;border-radius:13px;background:#d9d9d9"></div>
<div class="a" style="left:990.5px;top:612px;width:182.5px;height:25.6px;border-radius:6px;background:#2352ab"></div>
<div class="a bt" style="left:990.5px;top:615.3px;width:182.5px">1.EXPLAIN LIKE I'M 5</div>
<div class="a" style="left:1230.5px;top:614.6px;width:165.8px;height:25.4px;border-radius:6px;background:#2352ab"></div>
<div class="a" style="left:1258px;top:638px;width:111.7px;height:24.7px;border-radius:6px;background:#2352ab"></div>
<div class="a bt" style="left:1230.5px;top:617.8px;width:165.8px">2. EXAMPLES AND</div>
<div class="a bt" style="left:1258px;top:640.9px;width:111.7px">ANALOGIES</div>
<div class="a" style="left:1473.6px;top:613px;width:140.7px;height:25.8px;border-radius:6px;background:#2352ab"></div>
<div class="a bt" style="left:1473.6px;top:616.4px;width:140.7px">3. MOTIVATION</div>
<div class="a" style="left:984.3px;top:817.4px;width:129.4px;height:26.0px;border-radius:6px;background:#2352ab"></div>
<div class="a bt" style="left:984.3px;top:820.9px;width:129.4px">4. ROLE-PLAY</div>
<div class="a" style="left:1149.5px;top:813.8px;width:139.1px;height:26.0px;border-radius:6px;background:#2352ab"></div>
<div class="a bt" style="left:1149.5px;top:817.3px;width:139.1px">5. STUDY PLAN</div>
<div class="a" style="left:1346px;top:816px;width:74.0px;height:26.2px;border-radius:6px;background:#2352ab"></div>
<div class="a bt" style="left:1346px;top:819.6px;width:74.0px">6. QUIZ</div>
<div class="a" style="left:1499.6px;top:823px;width:117.8px;height:26.5px;border-radius:6px;background:#2352ab"></div>
<div class="a bt" style="left:1499.6px;top:826.8px;width:117.8px">7. MINDMAP</div>
<div class="a" style="left:1025.6px;top:1070.8px;width:98.4px;height:24.2px;border-radius:6px;background:#2352ab"></div>
<div class="a" style="left:1008.8px;top:1093.5px;width:131.5px;height:24.4px;border-radius:6px;background:#2352ab"></div>
<div class="a bt" style="left:1025.6px;top:1073.4px;width:98.4px">8. EXPERT</div>
<div class="a bt" style="left:1008.8px;top:1096.2px;width:131.5px">ROUNDTABLE</div>
<div class="a" style="left:1244.3px;top:1080.6px;width:102.4px;height:23.4px;border-radius:6px;background:#2352ab"></div>
<div class="a" style="left:1226px;top:1102.5px;width:140.0px;height:25.5px;border-radius:6px;background:#2352ab"></div>
<div class="a bt" style="left:1244.3px;top:1082.8px;width:102.4px">9. MENTAL</div>
<div class="a bt" style="left:1226px;top:1105.8px;width:140.0px">ASSOCIATIONS</div>
<div class="a" style="left:1419.5px;top:1069px;width:218.5px;height:26.0px;border-radius:6px;background:#2352ab"></div>
<div class="a" style="left:1498px;top:1093.5px;width:61.3px;height:23.2px;border-radius:6px;background:#2352ab"></div>
<div class="a bt" style="left:1419.5px;top:1072.5px;width:218.5px">10. IMPROVE WHAT YOU</div>
<div class="a bt" style="left:1498px;top:1095.6px;width:61.3px">HAVE</div>
<div class="a ct" style="left:980.4px;top:648.1px"><b>Description:</b><br>Break down tough ideas<br>so even a kid could get it.<br>Perfect for when you're<br>totally lost on a topic.</div>
<div class="a ct" style="left:980.4px;top:725.6px"><b>Prompt Template:</b><br>"Explain [insert concept or topic] as if you<br>were talking to a 5-year-old child. Use<br>simple language and everyday examples."</div>
<div class="a ct" style="left:1226px;top:667.4px"><b>Description:</b><br>Get real-world examples<br>that make abstract<br>ideas click.</div>
<div class="a ct" style="left:1226px;top:732.1px"><b>Prompt Template:</b><br>"Explain [insert concept or topic]<br>using three different real-world<br>examples or analogies that would be<br>easy for a beginner to understand."</div>
<div class="a ct" style="left:1442.5px;top:647.4px"><b>Description:</b><br>Get tips to keep yourself<br>motivated about learning,<br>even when it gets tough.</div>
<div class="a ct" style="left:1442.5px;top:711.6px"><b>Prompt Template:</b><br>"I'm struggling to stay motivated while<br>learning [insert subject or skill]. Provide<br>me with 5 practical strategies to boost<br>my motivation and maintain consistency<br>in my studies."</div>
<div class="a ct" style="left:977.3px;top:857.6px"><b>Description:</b><br>Act out scenarios to<br>practice what<br>you've<br>learned.</div>
<div class="a ct" style="left:977.3px;top:948.0px"><b>Prompt Template:</b><br>"Let's role-play a scenario<br>where I'm [insert role] and<br>you're [insert another role].<br>We'll practice [insert skill or<br>situation]. Begin the scenario,<br>and I'll respond accordingly."</div>
<div class="a ct" style="left:1146.4px;top:844.0px"><b>Description:</b><br>Map out your learning<br>journey from start to finish.<br>Great for tackling<br>big subjects<br>without getting<br>overwhelmed.</div>
<div class="a ct" style="left:1146.4px;top:947.0px"><b>Prompt Template:</b><br>"Create a detailed study plan<br>for learning [insert subject or<br>skill] over the course of [insert<br>time frame]. Include specific<br>goals, resources, and<br>milestones."</div>
<div class="a ct" style="left:1314px;top:847.6px"><b>Description:</b><br>Create some practice<br>questions to see<br>if you've really<br>got the hang<br>&nbsp;of things.</div>
<div class="a ct" style="left:1314px;top:937.6px"><b>Prompt Template:</b><br>"Generate a 10-question quiz<br>on [insert topic], including a<br>mix of multiple-choice,<br>true/false, and short-answer<br>questions. Provide answers<br>and brief explanations for<br>each question."</div>
<div class="a ct" style="left:1479.7px;top:854.4px"><b>Description:</b><br>Sketch out your thoughts to<br>see how everything connects.<br>Really helpful when<br>you're trying to wrap<br>your head around a<br>big topic.</div>
<div class="a ct" style="left:1479.7px;top:957.1px"><b>Prompt Template:</b><br>"Create a detailed mind map for<br>the topic [insert topic]. Include<br>main branches, sub-branches,<br>and key concepts or ideas for<br>each."</div>
<div class="a ct" style="left:978.2px;top:1128.2px"><b>Description:</b><br>Simulate a discussion<br>between people<br>who really know<br>their stuff. Great for<br>getting different<br>views on tricky topics.</div>
<div class="a ct" style="left:978.2px;top:1231.3px"><b>Prompt Template:</b><br>"Simulate a roundtable discussion<br>with me and three experts in [insert<br>field] discussing [insert topic or<br>question]. Present their different<br>viewpoints and any potential areas of<br>agreement or disagreement."</div>
<div class="a ct" style="left:1200px;top:1138.9px"><b>Description:</b><br>Come up with clever<br>memory tricks to<br>help stuff stick in<br>your brain. Useful<br>for remembering<br>lists, facts, or tricky<br>concepts.</div>
<div class="a ct" style="left:1200px;top:1254.6px"><b>Prompt Template:</b><br>"Help me create mental associations or<br>mnemonic devices to remember key<br>information about [insert topic or<br>concept]."</div>
<div class="a ct" style="left:1420px;top:1122.1px"><b>Description:</b><br>Get feedback and suggestions to<br>make your work even better.<br>Great for polishing up<br>something you've<br>already created.</div>
<div class="a ct" style="left:1420px;top:1224.9px"><b>Prompt Template:</b><br>"Here's something I've<br>[written/created/produced]: [insert your<br>work]. Please provide specific suggestions to<br>improve it, focusing on [aspect you want to<br>improve, e.g., clarity, structure,<br>persuasiveness]. Explain why each change<br>would make it better."</div><!-- icon1 child -->
<svg class="a" style="left:1100px;top:640px" width="100" height="100" viewBox="0 0 1512 1512"><g fill="none" stroke="#0a0a0a" stroke-width="40" stroke-linecap="round" stroke-linejoin="round">
<path d="M470,325 C560,250 680,235 800,235 C1000,240 1135,380 1135,590"/><path d="M375,465 C360,510 355,560 355,590"/>
<path d="M355,595 L720,600 C800,595 870,560 885,495 C900,560 1000,595 1135,595"/>
<path d="M420,600 C400,800 560,945 750,945 C940,945 1090,800 1085,600"/>
<path d="M425,615 A70,70 0 1,0 430,745"/><path d="M1080,615 A70,70 0 1,1 1075,745"/>
<path d="M705,745 Q750,790 795,745"/>
<path d="M470,1240 L470,1100 C470,1020 500,960 540,925"/><path d="M1030,1240 L1030,1100 C1030,1020 1000,960 950,925"/><path d="M470,1240 L1030,1240"/>
<path d="M660,965 C670,1050 830,1050 840,965"/><path d="M590,1090 L590,1240"/><path d="M915,1090 L915,1240"/><path d="M470,1140 L590,1140"/><path d="M915,1140 L1030,1140"/><path d="M690,1140 L810,1140"/>
</g><circle cx="415" cy="385" r="24" fill="#0a0a0a"/><circle cx="600" cy="705" r="34" fill="#0a0a0a"/><circle cx="900" cy="705" r="34" fill="#0a0a0a"/></svg>
<!-- icon2 analysis -->
<svg class="a" style="left:1340px;top:675px" width="80" height="75" viewBox="0 0 1613 1512"><g fill="none" stroke="#0a0a0a" stroke-width="38" stroke-linecap="round" stroke-linejoin="round">
<path d="M615,350 L1075,350 L1075,660"/><path d="M455,465 L455,850 L780,850"/><rect x="475" y="410" width="545" height="390" stroke-width="26"/>
<path d="M475,745 L640,530 L760,690 L855,585 L935,660"/><circle cx="920" cy="505" r="40"/>
<path d="M405,465 L405,860"/>
<rect x="295" y="230" width="320" height="235" rx="30" fill="#d9d9d9"/><circle cx="500" cy="320" r="38"/><path d="M300,380 C400,360 450,440 615,415"/>
<rect x="240" y="725" width="425" height="510" rx="15" fill="#d9d9d9"/>
<path d="M320,915 H580 M320,975 H580 M320,1040 H580 M320,1100 H460" stroke-width="34"/>
<path d="M1215,1100 L1385,1270" stroke-width="95"/><path d="M1215,1100 L1385,1270" stroke="#d9d9d9" stroke-width="20"/>
<circle cx="1030" cy="915" r="245" fill="#d9d9d9"/><circle cx="1030" cy="915" r="180" stroke-width="34"/>
<rect x="1140" y="325" width="225" height="165" rx="15"/>
</g><path d="M1170,470 L1210,390 L1250,440 L1290,395 L1340,470 Z" fill="#0a0a0a"/></svg>
<!-- icon3 fist -->
<svg class="a" style="left:1570px;top:645px" width="80" height="75" viewBox="0 0 1613 1512">
<path d="M660,1395 L660,1290 C520,1230 400,1100 395,880 C390,700 460,600 490,345 C570,380 630,420 660,450 C690,330 700,220 725,145 C900,230 1040,360 1100,520 C1120,470 1130,420 1140,395 C1280,520 1340,720 1340,900 C1340,1120 1220,1270 1030,1340 L985,1395 Z" fill="#0a0a0a"/>
<g fill="none" stroke="#e0e0e0" stroke-width="30" stroke-linecap="round" stroke-linejoin="round"><path d="M630,1270 L600,1100 L600,840 C600,770 650,760 700,770 L700,690 L1090,690 L1095,860 C1160,870 1190,930 1180,990 C1170,1060 1090,1120 1000,1200 L1000,1290"/><path d="M800,690 L800,900 M880,690 L880,880 M1000,690 L1000,860 M700,770 L700,960 L830,960"/><path d="M900,920 L1080,960 L970,1040 L850,1180"/></g>
<g fill="none" stroke="#0a0a0a" stroke-width="42" stroke-linecap="round"><path d="M330,750 C260,960 300,1160 465,1290"/><path d="M1200,340 C1420,540 1480,1020 1275,1290"/></g>
<path d="M250,490 Q265,575 350,590 Q265,605 250,690 Q235,605 150,590 Q235,575 250,490 Z M1125,100 Q1140,180 1225,195 Q1140,210 1125,295 Q1110,210 1025,195 Q1110,180 1125,100 Z" fill="#0a0a0a"/></svg>
<!-- icon4 person -->
<svg class="a" style="left:1055px;top:875px" width="80" height="80" viewBox="0 0 1512 1512"><g fill="#0a0a0a">
<path d="M625,225 L700,245 L785,225 L790,380 C780,420 740,440 700,440 C660,440 625,420 625,380 Z"/><rect x="515" y="470" width="280" height="430" rx="70"/></g>
<g fill="none" stroke="#0a0a0a" stroke-linecap="round" stroke-linejoin="round"><path d="M600,275 C555,300 560,380 600,405" stroke-width="32"/><path d="M880,255 L935,180 M930,305 L1010,285 M935,370 L1000,400" stroke-width="30"/>
<path d="M235,530 L400,590 L560,520" stroke-width="115"/><path d="M770,560 L920,600 L1105,480" stroke-width="115"/><path d="M555,880 L555,1330 M760,880 L775,1330" stroke-width="112"/></g>
<g fill="#d9d9d9"><rect x="662" y="290" width="30" height="25"/><rect x="725" y="290" width="30" height="25"/><path d="M655,375 Q705,420 755,375 Z"/></g></svg>
<!-- icon5 writing -->
<svg class="a" style="left:1230px;top:885px" width="70" height="70" viewBox="0 0 1512 1512"><g fill="none" stroke="#0a0a0a" stroke-width="40" stroke-linecap="round" stroke-linejoin="round">
<path d="M430,570 L230,570 L230,740"/><path d="M230,820 L230,1340 L1055,1340 L1055,935"/><path d="M320,1110 H960"/><path d="M320,1200 H960" stroke-width="48"/><path d="M320,1020 H370"/>
<path d="M460,1020 L480,900 L955,200 L1050,260 L590,960 Z"/><path d="M900,275 L1000,340"/>
<path d="M960,450 C1020,490 1060,530 1190,535"/><path d="M1190,600 L1190,465 L1390,465 L1390,590 M1390,660 L1390,935 L1190,935 L1190,600"/>
<path d="M640,440 C540,440 480,560 470,640 C460,700 500,710 530,710"/><path d="M930,610 C900,660 870,680 840,680 L570,690 C520,690 520,780 570,780 L830,790 C880,800 900,850 880,900"/><circle cx="740" cy="870" r="58"/><circle cx="840" cy="870" r="52"/><path d="M900,845 L1190,845"/>
</g></svg>
<!-- icon6 quiz -->
<svg class="a" style="left:1395px;top:880px" width="65" height="60" viewBox="0 0 1638 1512"><g fill="#0a0a0a"><rect x="225" y="215" width="535" height="525" rx="95"/><rect x="825" y="215" width="535" height="525" rx="95"/><rect x="225" y="815" width="535" height="525" rx="95"/><rect x="825" y="815" width="535" height="525" rx="95"/></g>
<g fill="none" stroke="#e6e6e6" stroke-width="34" stroke-linecap="round"><rect x="400" y="345" width="190" height="275"/><path d="M570,625 L670,625"/><path d="M995,345 V560 C995,610 1020,620 1100,620 C1180,620 1200,600 1200,560 V345"/><path d="M490,905 L500,1195"/><path d="M990,945 H1195 L995,1215 H1210"/></g></svg>
<!-- icon7 head network -->
<svg class="a" style="left:1585px;top:900px" width="60" height="65" viewBox="0 0 1396 1512">
<path d="M540,1440 L540,1230 C470,1230 390,1210 330,1180 L320,1050 C240,1030 170,1000 195,940 C230,870 280,790 310,700 C330,420 560,165 800,165 C1100,160 1315,380 1315,650 C1315,800 1250,940 1190,1030 L1225,1440 Z" fill="#0a0a0a"/>
<g stroke="#e0e0e0" stroke-width="34"><path d="M770,780 L775,340 M770,780 L510,605 M770,780 L1080,565 M770,780 L540,1030 M770,780 L1020,975"/></g><g fill="#e0e0e0"><rect x="700" y="710" width="145" height="140" rx="20"/><circle cx="775" cy="340" r="75"/><circle cx="510" cy="605" r="70"/><circle cx="1080" cy="565" r="70"/><circle cx="540" cy="1030" r="70"/><circle cx="1020" cy="975" r="70"/></g></svg>
<!-- icon8 roundtable -->
<svg class="a" style="left:1090px;top:1140px" width="80" height="80" viewBox="0 0 1512 1512"><g fill="none" stroke-linecap="round" stroke-linejoin="round">
<circle cx="770" cy="775" r="520" stroke="#0a0a0a" stroke-width="38"/>
<g id="hs"><path d="M160,300 C90,420 160,560 350,670" stroke="#0a0a0a" stroke-width="135"/><path d="M160,300 C90,420 160,560 350,670" stroke="#d9d9d9" stroke-width="60"/><path d="M320,220 C420,160 520,200 600,280" stroke="#0a0a0a" stroke-width="135"/><path d="M320,220 C420,160 520,200 600,280" stroke="#d9d9d9" stroke-width="60"/><rect x="140" y="160" width="190" height="140" rx="30" transform="rotate(40 235 230)" fill="#d9d9d9" stroke="#0a0a0a" stroke-width="38"/><rect x="260" y="310" width="190" height="130" rx="30" transform="rotate(40 355 375)" fill="#d9d9d9" stroke="#0a0a0a" stroke-width="38"/></g>
<use href="#hs" transform="translate(1540,0) scale(-1,1)"/><use href="#hs" transform="translate(0,1550) scale(1,-1)"/><use href="#hs" transform="translate(1540,1550) scale(-1,-1)"/>
<rect x="900" y="500" width="200" height="190" rx="15" transform="rotate(45 1000 595)" stroke="#0a0a0a" stroke-width="38"/><rect x="430" y="900" width="190" height="170" rx="12" transform="rotate(45 525 985)" stroke="#0a0a0a" stroke-width="38"/><path d="M460,960 L600,1060" stroke="#0a0a0a" stroke-width="34"/>
</g></svg>
<!-- icon9 head graph -->
<svg class="a" style="left:1305px;top:1155px" width="80" height="85" viewBox="0 0 1423 1512">
<path d="M290,1400 L350,1090 C220,980 150,820 150,660 C150,330 420,110 720,110 C1000,110 1230,300 1260,620 L1380,840 C1390,870 1380,890 1350,900 L1260,940 L1200,1230 C1180,1290 1120,1310 1050,1300 L850,1270 L810,1400 Z" fill="#0a0a0a"/>
<path d="M425,815 L570,620 L730,800 L920,580" fill="none" stroke="#e6e6e6" stroke-width="75" stroke-linecap="round" stroke-linejoin="round"/><path d="M770,520 L965,445 L960,670 Z" fill="#e6e6e6" stroke="#e6e6e6" stroke-width="30" stroke-linejoin="round"/></svg>
<!-- icon10 hand chart -->
<svg class="a" style="left:1545px;top:1155px" width="90" height="90" viewBox="0 0 1512 1512"><g fill="none" stroke-linecap="round" stroke-linejoin="round">
<path d="M195,700 L525,390 L625,450 L880,230" stroke="#0a0a0a" stroke-width="120"/><path d="M195,700 L525,390 L625,450 L880,230" stroke="#d9d9d9" stroke-width="45"/><path d="M700,170 L910,165 L905,370" stroke="#0a0a0a" stroke-width="120"/><path d="M700,170 L910,165 L905,370" stroke="#d9d9d9" stroke-width="45"/>
<g stroke="#0a0a0a" stroke-width="40"><path d="M510,880 L510,720 C510,630 680,630 680,720 L680,800"/><path d="M760,940 L760,560 C760,460 925,460 925,560 L925,960"/><path d="M1005,940 L1005,380 C1005,270 1185,270 1185,380 L1185,420 M1185,500 L1185,840"/>
<path d="M195,1190 C160,1060 180,990 300,960 C430,930 560,880 760,780 C850,740 880,820 800,880 C760,910 740,950 790,980 L970,980 L1280,820 C1340,800 1370,880 1310,940 L1070,1140 L570,1265"/><path d="M215,1270 L245,1370 C270,1420 320,1430 380,1410 L550,1350 L440,965"/><circle cx="385" cy="1295" r="55"/></g>
</g></svg>
<!-- MENU BAR -->
<div id="menubar" class="a"><div class="a" style="left:0;top:42.5px;width:2560px;height:1px;background:#6fa595"></div>
  <svg class="a" style="left:37px;top:6px" width="22" height="28" viewBox="0 0 384 512"><path fill="#0a0a0a" d="M318.7 268.7c-.2-36.7 16.4-64.4 50-84.8-18.8-26.9-47.2-41.7-84.7-44.6-35.5-2.8-74.3 20.7-88.5 20.7-15 0-49.4-19.7-76.4-19.7C63.3 141.2 4 184.8 4 273.5q0 39.3 14.4 81.2c12.8 36.7 59 126.7 107.2 125.2 25.2-.6 43-17.9 75.8-17.9 31.8 0 48.3 17.9 76.4 17.9 48.6-.7 90.4-82.5 102.6-119.3-65.2-30.7-61.7-90-61.7-91.9zm-56.6-164.2c27.3-32.4 24.8-61.9 24-72.5-24.1 1.4-52 16.4-67.9 34.9-17.5 19.8-27.8 44.3-25.6 71.9 26.1 2 49.9-11.4 69.5-34.3z"/></svg>
  <div class="mb" style="left:96px;font-weight:bold;font-size:24px;top:8px">Firefox</div>
  <div class="mb" style="left:211px">File</div>
  <div class="mb" style="left:286px">Edit</div>
  <div class="mb" style="left:365px">View</div>
  <div class="mb" style="left:453px">History</div>
  <div class="mb" style="left:567px">Bookmarks</div>
  <div class="mb" style="left:723px">Profiles</div>
  <div class="mb" style="left:841px">Tools</div>
  <div class="mb" style="left:935px">Window</div>
  <div class="mb" style="left:1058px">Help</div>
  <!-- status icons -->
  <svg class="a" style="left:1787px;top:7px" width="30" height="30" viewBox="0 0 30 30"><defs><linearGradient id="zmg" x1="0" y1="0" x2="0" y2="1"><stop offset="0" stop-color="#4a8cff"/><stop offset="1" stop-color="#1d4fd8"/></linearGradient></defs><rect x="0.5" y="0.5" width="29" height="29" rx="10" fill="url(#zmg)"/><text x="15" y="19" font-family="Liberation Sans" font-size="12.5" fill="#fff" text-anchor="middle" letter-spacing="-.3">zm</text></svg>
  <svg class="a" style="left:1850px;top:7px" width="30" height="30" viewBox="0 0 30 30"><circle cx="15" cy="15" r="12.5" fill="none" stroke="#111" stroke-width="2.6"/><circle cx="15" cy="15" r="8" fill="none" stroke="#111" stroke-width="2.2"/><rect x="13.6" y="9.5" width="2.8" height="11" rx="1.2" fill="#111"/></svg>
  <svg class="a" style="left:1913px;top:7px" width="28" height="28" viewBox="0 0 28 28"><circle cx="14" cy="14" r="11.5" fill="none" stroke="#111" stroke-width="2.3"/><path d="M11 8.8v10.4l8.2-5.2z" fill="#111"/></svg>
  <svg class="a" style="left:1971px;top:9px" width="46" height="24" viewBox="0 0 46 24"><rect x="1.5" y="2" width="37" height="20" rx="5" fill="none" stroke="#111" stroke-width="2.4"/><rect x="5" y="5.5" width="30" height="13" rx="2.5" fill="#111"/><rect x="41" y="8.5" width="3" height="7" rx="1.4" fill="#111"/><path d="M22.5 3l-8 10h6l-3 8 9-10h-6l3-8z" fill="#96dfd3" stroke="#96dfd3" stroke-width="1.2"/><path d="M22 5l-6 7.5h5l-2.4 6.5 6.8-7.8h-5z" fill="#111"/></svg>
  <svg class="a" style="left:2049px;top:8px" width="33" height="26" viewBox="0 0 33 26"><path d="M16.5 24l4.2-5.3a6.6 6.6 0 0 0-8.4 0z" fill="#111"/><path d="M6.7 12.8a15.5 15.5 0 0 1 19.6 0" fill="none" stroke="#111" stroke-width="3.4" stroke-linecap="round"/><path d="M2 7.3a22.5 22.5 0 0 1 29 0" fill="none" stroke="#111" stroke-width="3.4" stroke-linecap="round"/><path d="M11 17.8a8.5 8.5 0 0 1 11 0" fill="none" stroke="#111" stroke-width="3.4" stroke-linecap="round"/></svg>
  <svg class="a" style="left:2115px;top:8px" width="27" height="27" viewBox="0 0 27 27"><circle cx="11" cy="11" r="8.5" fill="none" stroke="#111" stroke-width="2.6"/><path d="M17.3 17.3l7 7" stroke="#111" stroke-width="3" stroke-linecap="round"/></svg>
  <svg class="a" style="left:2173px;top:8px" width="27" height="27" viewBox="0 0 27 27"><rect x="1.5" y="2" width="24" height="10" rx="5" fill="none" stroke="#111" stroke-width="2.4"/><circle cx="6.5" cy="7" r="3" fill="#111"/><rect x="1.5" y="15" width="24" height="10" rx="5" fill="#111"/><circle cx="20.5" cy="20" r="3.2" fill="#96dfd3"/></svg>
  <svg class="a" style="left:2232px;top:8px" width="27" height="27" viewBox="0 0 27 27"><defs><linearGradient id="sirig" x1="0" y1="0" x2="1" y2="1"><stop offset="0" stop-color="#f7a35c"/><stop offset=".5" stop-color="#e85aa5"/><stop offset="1" stop-color="#7a6cf0"/></linearGradient></defs><circle cx="13.5" cy="13.5" r="12.5" fill="url(#sirig)"/><circle cx="13.5" cy="13.5" r="9.5" fill="#f8d6e2" opacity=".75"/><path d="M4 12c4-4 8 6 12 2s5-4 7-2M5 16c4 3 9-5 13-1" stroke="#e9a3bd" stroke-width="1.4" fill="none"/></svg>
  <div class="mb" style="left:2286px;font-size:24.2px;top:9px">Mon Jan 19</div>
  <div class="mb" style="left:2427px;font-size:24.2px;top:9px">10:11 PM</div>
</div>

</div></body></html>
